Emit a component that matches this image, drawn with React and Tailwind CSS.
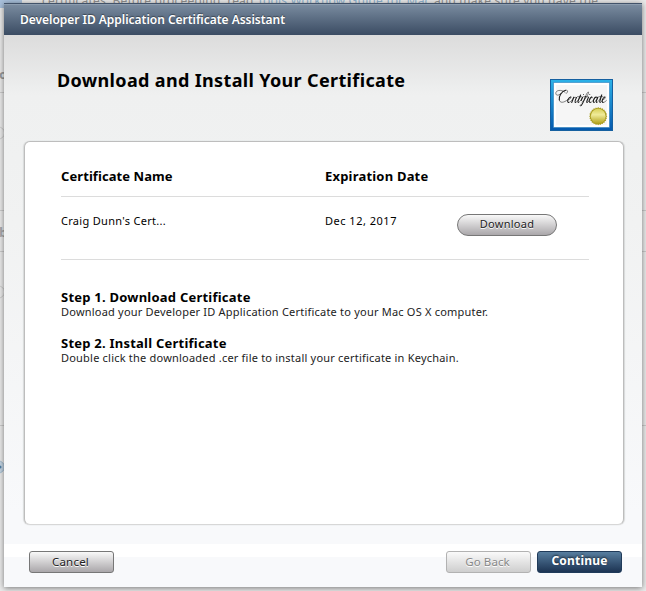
function Backdrop() {
  return (
    <div className="absolute inset-0 overflow-hidden bg-[#ebebeb]" aria-hidden="true">
      <div className="absolute left-0 top-0 h-[8px] w-[22px] bg-[#a9c1dc]" />
      <p className="absolute left-[42px] top-[-7px] whitespace-nowrap text-[12px] leading-[16px] tracking-[0.2px] text-[#929292]">
        certificates. Before proceeding, read <span className="text-[#8fb4d2]">Tools Workflow Guide for Mac</span> and make sure you have the
      </p>
      <svg className="absolute left-0 top-0" width="646" height="591" fill="none" stroke="#cccccc">
        <path d="M0 92.5H646M0 210.5H646M0 251.5H646M0 425.5H646" />
        <circle cx="-1.500" cy="133" r="6" />
        <circle cx="-1.500" cy="292" r="6" />
        <circle cx="-1.500" cy="467" r="6" fill="#c4d5e4" stroke="#a5bed2" />
        <circle cx="0" cy="467" r="1.5" fill="#4f7fa5" stroke="none" />
      </svg>
      <span className="absolute left-[-1px] top-[66px] text-[13px] font-bold leading-[16px] text-[#999]">o</span>
      <span className="absolute left-[-1px] top-[224px] text-[13px] font-bold leading-[16px] text-[#aaa]">b</span>
    </div>
  );
}

function CertificateIcon() {
  const teeth = Array.from({ length: 48 }, (_, i) => {
    const r = i % 2 ? 8.1 : 9.1;
    const a = (i * Math.PI) / 24;
    return `${48.2 + r * Math.cos(a)},${37.2 + r * Math.sin(a)}`;
  }).join(" ");
  return (
    <svg width="63" height="52" viewBox="0 0 63 52" fill="none" className="block shrink-0">
      <defs>
        <linearGradient id="frame" x2="0" y2="1">
          <stop stopColor="#2cb2e8" />
          <stop offset="1" stopColor="#0558ad" />
        </linearGradient>
        <linearGradient id="seal" x2="0" y2="1">
          <stop stopColor="#d8d058" />
          <stop offset=".4" stopColor="#f0eb99" />
          <stop offset="1" stopColor="#b2a31c" />
        </linearGradient>
      </defs>
      <rect x=".5" y=".5" width="62" height="51" fill="url(#frame)" stroke="#1560a0" />
      <rect x="3.5" y="3.5" width="56" height="45" fill="#fff" stroke="#2b7fbb" strokeOpacity=".6" />
      <rect x="6" y="6" width="51" height="40" fill="#f6f6f6" />
      <g stroke="#1c1c1c" strokeLinecap="round" strokeLinejoin="round">
        <g strokeWidth=".55">
          <path d="M16.300 14.500C18.500 12.500 17.800 10.600 15.500 11.300M9.300 21C9.700 24.500 14 23.800 17.500 20.800" />
          <path d="M15 13.200C11 10 5.500 11.300 5.800 14.500C6 17 9.500 16.500 10.800 14.300" />
          <path d="M17.600 21C20 20.500 22 18.500 20.800 17.900M18.600 23.500C20 23.500 21.800 22 23.800 18.200M23.800 18.500C24.800 19 25.800 17.700 26.500 18.500M25.400 23.500C26.800 23.400 28.300 21.500 30.600 17.500M28.400 23.400C29.800 23.200 31 21.500 32.400 18.500M32 23.300C34.500 21.500 38.500 15.500 38.600 13.200C37.500 12.600 36.500 15 35.500 17.500M31.200 26.500C30 28 29.500 26.500 30.800 25.500" />
          <path d="M37.200 23.400C38.500 23.300 39.800 21 41.200 18.300C42 17.500 43 18 42.300 19M40.200 23.500C42 23.400 43.500 21.500 44.500 19.500M44 23.500C45 23.400 46.400 21.500 47.700 18.500M46.800 23.400C48.200 23.200 49.700 21 51.600 16M50.200 23.400C51.400 23.300 52.300 21.500 53 20.600C55 20.200 56 18.300 54.900 17.900M53 23.500C54.500 23.500 55.500 22.400 56.400 21.500" />
          <path d="M27.500 17.700H31.500M33.500 17.700H38M48.800 17.700H53" />
        </g>
        <g strokeWidth="1.050">
          <path d="M15.500 11.300C11.500 12.500 8.600 17.200 9.300 21" />
          <path d="M20.800 17.900C18.800 18 16.300 22.800 18.600 23.500M23.800 18.200L21.700 23.500M26.500 18.500C25.800 20 24.300 23 25.400 23.500M30.600 16L28.200 21.500C27.900 22.500 27.700 23.300 28.400 23.400M32.500 18.300L31.200 21.500M35.500 17.500C34.200 21 32.800 24.800 31.200 26.500M38.500 18.300L37 21.800C36.700 22.600 36.600 23.300 37.200 23.400" />
          <path d="M41.600 18C39.400 19 38.200 23 40.200 23.500M46.700 18.300C44.500 17.300 42.200 22.800 44 23.500M47.800 18.300L46.400 21.700C46 22.700 46.200 23.300 46.800 23.400M51.700 16L50 21.500C49.700 22.500 49.600 23.300 50.200 23.400M54.900 17.900C53 18.200 51 22.800 53 23.500" />
        </g>
        <path d="M33.500 15.500h.1M39.700 15.500h.1" strokeWidth=".8" />
      </g>
      <polygon points={teeth} fill="#aa9d20" />
      <circle cx="48.200" cy="37.200" r="7.400" fill="url(#seal)" />
    </svg>
  );
}

function Step({ title, children }) {
  return (
    <section className="flex h-[46px] flex-col">
      <h3 className="text-[13px] font-bold leading-4 tracking-[0.23px] text-black">{title}</h3>
      <p className="whitespace-nowrap text-[11px] leading-[14px] tracking-[0.21px] text-[#222]">{children}</p>
    </section>
  );
}

export default function App() {
  return (
    <div className="relative h-[591px] w-[646px] overflow-hidden font-['Noto_Sans',sans-serif]">
      <Backdrop />
      <div className="relative px-1 pt-[3px]">
        <div className="flex h-[584px] w-[638px] flex-col whitespace-nowrap bg-[linear-gradient(#dcdcdc_32px,#eff0f0_92px,#f1f2f2_220px,#f8f9fb_510px)] shadow-[0_1px_6px_rgba(0,0,0,0.5)]">
          <header className="flex h-8 shrink-0 items-center border-t border-[#42536a] bg-linear-to-b from-[#7b8da1] to-[#3b4c63] pl-4 shadow-[inset_0_1px_0_#8c9cae]">
            <h1 className="text-[12px] font-semibold leading-4 tracking-[-0.025px] text-white [text-shadow:0_-1px_1px_rgba(0,0,0,0.4)]">Developer ID Application Certificate Assistant</h1>
          </header>
          <div className="flex h-[106px] shrink-0 items-start justify-between pl-[53px] pr-[29px]">
            <h2 className="mt-[33px] text-[18px] font-bold leading-6 tracking-[0.35px] text-black">Download and Install Your Certificate</h2>
            <div className="mt-[44px]"><CertificateIcon /></div>
          </div>
          <main className="mx-5 h-[384px] w-[600px] shrink-0 rounded-[6px] border border-x-[#bdbdbd] border-b-[#d7d7d7] border-t-[#bdbdbd] bg-white pl-9 pr-[34px] shadow-[-1px_0_1px_#d8dada,1px_0_1px_#d8dada]">
            <div className="grid h-[55px] grid-cols-[264px_1fr] border-b border-[#dcdcdc] pt-[26px] text-[13px] font-bold leading-4 text-black">
              <span className="tracking-[0.08px]">Certificate Name</span>
              <span className="tracking-[0.2px]">Expiration Date</span>
            </div>
            <div className="grid h-[63px] grid-cols-[264px_132px_100px] border-b border-[#dcdcdc] pt-[17px] text-[11px] leading-[14px] text-black">
              <span className="tracking-[0.3px]">Craig Dunn's Cert...</span>
              <span className="tracking-[0.5px]">Dec 12, 2017</span>
              <button className="flex h-[22px] w-[100px] items-center justify-center rounded-full border border-[#777] bg-linear-to-b from-[#f9f9f9] to-[#aaa7aa] pb-[2px] text-[11px] leading-4 tracking-[0.3px] text-[#222] [text-shadow:0_1px_0_#fff]">Download</button>
            </div>
            <div className="pt-[29px]">
              <Step title="Step 1. Download Certificate">Download your Developer ID Application Certificate to your Mac OS X computer.</Step>
              <Step title="Step 2. Install Certificate">Double click the downloaded .cer file to install your certificate in Keychain.</Step>
            </div>
          </main>
          <div className="mt-[19px] flex h-[43px] items-start bg-[linear-gradient(#fff_13px,#f8f9fb_13px)] pl-[25px] pr-5 pt-[7px]">
            <button className="h-[22px] w-[85px] rounded-[3px] border border-[#777] bg-linear-to-b from-[#f9f9f9] to-[#aaa7aa] pr-0.5 text-[11.5px] leading-[20px] tracking-[0.2px] text-[#222] [text-shadow:0_1px_0_#fff]">Cancel</button>
            <button className="ml-auto h-[22px] w-[85px] rounded-[3px] border border-[#b2b2b2] bg-linear-to-b from-[#fafafa] to-[#cecece] pr-0.5 text-[11.5px] leading-[20px] tracking-[0.1px] text-[#888] [text-shadow:0_1px_0_#fff]">Go Back</button>
            <button className="ml-[6px] h-[22px] w-[85px] rounded-[3px] border border-[#203b5a] bg-linear-to-b from-[#587e9f] to-[#1d3453] pb-[2px] text-[12px] font-bold leading-[18px] tracking-[0.2px] text-white [text-shadow:0_-1px_2px_rgba(0,0,0,0.6)]">Continue</button>
          </div>
        </div>
      </div>
    </div>
  );
}
